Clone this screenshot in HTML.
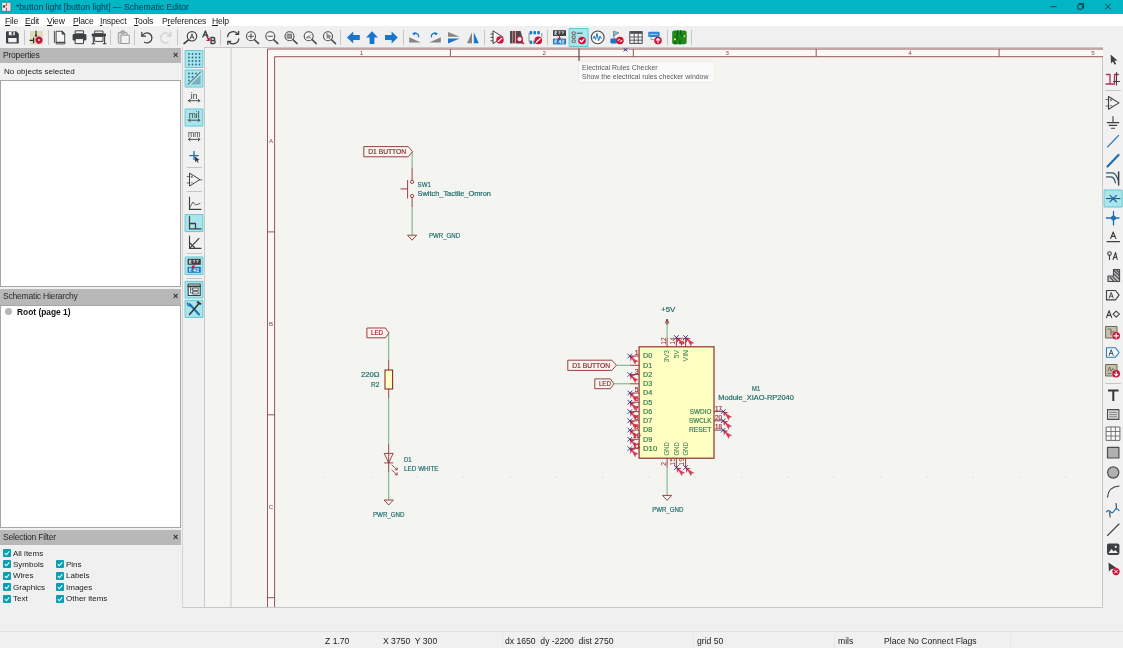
<!DOCTYPE html>
<html>
<head>
<meta charset="utf-8">
<title>Schematic Editor</title>
<style>
*{box-sizing:border-box;margin:0;padding:0}
html,body{width:1123px;height:648px;overflow:hidden;background:#f0f0f0;font-family:"Liberation Sans",sans-serif;}
body{position:relative}
.abs{position:absolute}
#menu span,.sf,.hdr,#status span,#title .t,.tt,svg{will-change:transform}
#title{left:0;top:0;width:1123px;height:14px;background:#00b5c4;}
#title .t{left:16px;top:2px;font-size:8.6px;line-height:10px;color:#0a3840;white-space:nowrap}
#menu{left:0;top:14px;width:1123px;height:12px;background:#fff;}
#menu span{position:absolute;top:1.5px;font-size:8.6px;letter-spacing:-.2px;line-height:10px;color:#1a1a1a;white-space:nowrap}
#menu u{text-decoration:underline;text-underline-offset:1px}
#tb{left:0;top:26px;width:1123px;height:21px;background:#f0f0f0;}
.sep{position:absolute;top:30px;width:1px;height:15px;background:#c9c9c9}
.hdr{position:absolute;left:0;width:181px;height:15px;background:#b8b8b8;font-size:8.6px;letter-spacing:-.25px;line-height:15px;color:#2a2a2a;padding-left:3px}
.hdr b{position:absolute;right:3px;top:0;font-weight:bold;font-size:9px}
.box{position:absolute;left:0;width:181px;background:#fff;border:1px solid #a6a6a6;border-bottom-width:1.5px}
.sf{position:absolute;font-size:8px;line-height:10px;color:#1a1a1a;white-space:nowrap}
.cb{position:absolute;width:8px;height:8px;background:#0c9fb2;border-radius:1px}
#status{left:0;top:631px;width:1123px;height:17px;background:#f0f0f0;border-top:1px solid #e0e0e0}
#status i{position:absolute;top:1px;width:1px;height:16px;background:#e7e7e7}
#status span{position:absolute;top:3.5px;font-size:8.6px;line-height:11px;color:#1a1a1a;white-space:nowrap}
#canvas{left:204px;top:47px;width:899px;height:561px;border:1px solid #c8c8c8;background:#f4f5f0;overflow:hidden}
</style>
</head>
<body>
<!-- title bar -->
<div id="title" class="abs"><div class="t abs">*button light [button light] — Schematic Editor</div></div>
<svg class="abs" style="left:0;top:0" width="14" height="14" viewBox="0 0 14 14">
<rect x="1.800" y="2.300" width="9" height="9" rx=".8" fill="#f4efec" stroke="#1f6a7a" stroke-width=".7"/>
<rect x="6.600" y="3" width="3.600" height="7.800" fill="#f8d8da"/>
<circle cx="4.200" cy="6.500" r="1.300" fill="#4a3020"/>
<path d="M6.300 3.200V6M6.300 7.600V10.800" stroke="#a03858" stroke-width="1"/>
<path d="M5 6.800h3.400" stroke="#f4efec" stroke-width="1"/>
</svg>
<!-- menu -->
<div id="menu" class="abs">
<span style="left:5px"><u>F</u>ile</span>
<span style="left:25px"><u>E</u>dit</span>
<span style="left:47px"><u>V</u>iew</span>
<span style="left:73px"><u>P</u>lace</span>
<span style="left:100px"><u>I</u>nspect</span>
<span style="left:134px"><u>T</u>ools</span>
<span style="left:162px">P<u>r</u>eferences</span>
<span style="left:212px"><u>H</u>elp</span>
</div>
<div id="tb" class="abs"></div>
<!-- top toolbar icons -->
<svg class="abs" style="left:0;top:27px" width="1123" height="20" viewBox="0 27 1123 20" fill="none" stroke-linecap="round" stroke-linejoin="round">
<g stroke="#c6c6c6" stroke-width="1" shape-rendering="crispEdges">
<path d="M24.5 30V45M48.5 30V45M110.5 30V45M134.5 30V45M177.5 30V45M220.5 30V45M340.5 30V45M403.5 30V45M484.5 30V45M547.5 30V45M667.5 30V45M691.5 30V45"/>
</g>
<!-- save -->
<g id="i-save">
<path d="M6 32.2a1 1 0 0 1 1-1h9.2l2.6 2.6v8.7a1 1 0 0 1-1 1H7a1 1 0 0 1-1-1z" fill="#3d4043"/>
<rect x="8.2" y="38" width="8.4" height="4.3" fill="#f4f4f4"/>
<rect x="8.8" y="31.6" width="6" height="3.6" fill="#f4f4f4"/>
<rect x="11.6" y="32" width="1.8" height="2.8" fill="#3d4043"/>
</g>
<!-- schematic setup -->
<g id="i-setup">
<rect x="30" y="31" width="12.800" height="13.600" fill="#dfdabc"/>
<path d="M36 31.200V35.600" stroke="#3a4a30" stroke-width="1.300"/><circle cx="36" cy="35.700" r="1.100" fill="#2a2a20"/>
<path d="M30 40.300H33.600M33.600 38V42.700" stroke="#2a2a20" stroke-width="1.200"/>
<circle cx="39" cy="40.100" r="2.500" fill="none" stroke="#c8143c" stroke-width="2.200" stroke-dasharray="1.300 0.660"/>
<circle cx="39" cy="40.100" r="2" fill="#c8143c"/>
<circle cx="39" cy="40.100" r="1" fill="#fde"/>
</g>
<!-- page settings -->
<g stroke="#4a4a4a" stroke-width="1" fill="#f6f6f6">
<path d="M54.400 31.300V42.300" fill="none"/>
<path d="M56.500 31.300h5.600l2.600 2.800v9.800h-8.200z"/>
<path d="M62.100 31.300v2.800h2.600z" fill="#3a3a3a"/>
<path d="M56.500 42.400h8.200" stroke-width="1.400"/>
</g>
<!-- print -->
<g>
<rect x="75.5" y="30.8" width="8" height="3" fill="#f4f4f4" stroke="#3d4043" stroke-width="1"/>
<rect x="72.6" y="34" width="13.8" height="6.6" rx="1.4" fill="#3d4043"/>
<rect x="75.5" y="38.6" width="8" height="5" fill="#f4f4f4" stroke="#3d4043" stroke-width="1"/>
</g>
<!-- plot -->
<g>
<rect x="95" y="31" width="8" height="2.6" fill="#e8e8e8" stroke="#3d4043" stroke-width=".9"/>
<rect x="91.8" y="33.4" width="14.2" height="3.2" rx=".8" fill="#3d4043"/>
<rect x="95" y="36.4" width="8" height="5" fill="#f4f4f4" stroke="#3d4043" stroke-width="1"/>
<path d="M93.3 36.5V43.6M104.6 36.5V43.6M92 43.8h2.8M103.2 43.8h2.8" stroke="#3d4043" stroke-width="1.1"/>
</g>
<!-- paste (disabled) -->
<g stroke="#9a9a9a" stroke-width="1" fill="#dedede">
<rect x="118.3" y="32.6" width="9" height="10.6" rx=".8"/>
<rect x="121" y="31" width="3.8" height="2.4" rx=".6" fill="#bdbdbd"/>
<rect x="121.3" y="35.2" width="8" height="8.3" fill="#f2f2f2"/>
</g>
<!-- undo -->
<g stroke="#3d4043" stroke-width="1.3">
<path d="M141.8 36.2h3.6M141.8 36.2v-3.8"/>
<path d="M142.3 36a5 5 0 1 1 2.2 6.3"/>
</g>
<!-- redo disabled -->
<g stroke="#cfcfcf" stroke-width="1.3">
<path d="M170.8 36.2h-3.6M170.8 36.2v-3.8"/>
<path d="M170.3 36a5 5 0 1 0-2.2 6.3"/>
</g>
<!-- find -->
<g stroke="#3d4043" stroke-width="1.2">
<circle cx="192" cy="36.3" r="4.7" fill="#f6f6f6"/>
<path d="M188.5 39.8L184 43.6" stroke-width="1.6"/>
<path d="M190.2 38.8l1.8-5 1.8 5M190.9 37.3h2.2" stroke-width=".9"/>
</g>
<!-- find replace -->
<g stroke="#3d4043" stroke-width="1.3">
<path d="M202.8 37l2.6-6 2.6 6M203.8 35h3.2"/>
<path d="M211 43.5v-6h2.3a1.5 1.5 0 0 1 0 3h-2.3h2.7a1.5 1.5 0 0 1 0 3z"/>
<path d="M206.8 36.6l2.2 3.6M209.2 38.2v2.2h-2.2" stroke="#d3143c" stroke-width="1.2"/>
</g>
<!-- refresh -->
<g stroke="#3d4043" stroke-width="1.3">
<path d="M227.6 36.6a5.7 5.7 0 0 1 10.2-2.6M238.8 39a5.7 5.7 0 0 1-10.2 2.6"/>
<path d="M238.6 31.3v3h-3M227.8 44.3v-3h3"/>
</g>
<!-- zoom in/out/fit/obj/sel -->
<g stroke="#4a4d50" stroke-width="1.1">
<g id="mag"><circle cx="251" cy="36.2" r="4.5" fill="#f6f6f6"/><path d="M254.4 39.6L258.6 43.6" stroke-width="1.5"/></g>
<path d="M248.7 36.2h4.6M251 33.9v4.6"/>
<g transform="translate(19.3 0)"><circle cx="251" cy="36.2" r="4.5" fill="#f6f6f6"/><path d="M254.4 39.6L258.6 43.6" stroke-width="1.5"/><path d="M248.7 36.2h4.6"/></g>
<g transform="translate(38.5 0)"><circle cx="251" cy="36.2" r="4.5" fill="#f6f6f6"/><path d="M254.4 39.6L258.6 43.6" stroke-width="1.5"/><rect x="249" y="34.2" width="4" height="4" fill="#9a9a9a" stroke-width=".7"/></g>
<g transform="translate(57.7 0)"><circle cx="251" cy="36.2" r="4.5" fill="#f6f6f6"/><path d="M254.4 39.6L258.6 43.6" stroke-width="1.5"/><path d="M248.8 37.8h4.4M249.2 37.6l1.2-1.6 1 .8 1.3-1.8" stroke-width=".7"/></g>
<g transform="translate(77 0)"><circle cx="251" cy="36.2" r="4.5" fill="#f6f6f6"/><path d="M254.4 39.6L258.6 43.6" stroke-width="1.5"/><path d="M249.8 33.8l.3 4.6 1.2-1.2 1 1.6.7-.4-1-1.6 1.6-.3z" fill="#9a9a9a" stroke-width=".5"/></g>
</g>
<!-- nav arrows -->
<g fill="#1976cf">
<path d="M347 37.5l6.2-6v3.6h6.6v4.8h-6.6v3.6z"/>
<path d="M372 31.2l6 6.2h-3.6v6.6h-4.8v-6.6h-3.6z"/>
<path d="M397.8 37.5l-6.2-6v3.6h-6.6v4.8h6.600v3.6z"/>
</g>
<!-- rotate ccw / cw -->
<path d="M409.2 37.2v5.4h11.6z" fill="#8a8480"/>
<path d="M418.6 36.8a3 3 0 0 0-4.6-3" stroke="#1976cf" stroke-width="1.3"/>
<path d="M412 33.6l3.4-1.6-.6 3.4z" fill="#1976cf"/>
<path d="M440.8 37.2v5.400h-11.6z" fill="#8a8480"/>
<path d="M431.400 36.8a3 3 0 0 1 4.6-3" stroke="#1976cf" stroke-width="1.3"/>
<path d="M438 33.600l-3.400-1.6.6 3.400z" fill="#1976cf"/>
<!-- mirror v / h -->
<path d="M448 32v4.800h11.800z" fill="#8a8480"/>
<path d="M448 43.400v-4.800h11.800z" fill="#1976cf"/>
<path d="M472 32.200v11h-5z" fill="#8a8480"/>
<path d="M473.800 32.200v11h5z" fill="#1976cf"/>
<!-- symbol editor -->
<g stroke="#3d4043" stroke-width="1">
<path d="M493 31.200v12.400l9.800-6.200z" fill="#f8f8f8"/>
<path d="M490.800 34h2.200M490.800 37.400h2.200M490.800 40.800h2.200" stroke-width=".9"/>
</g>
<circle cx="500" cy="39.900" r="3.700" fill="#cc1236"/>
<path d="M498.200 41.500l3.600-3.200" stroke="#fff" stroke-width="1.300"/>
<!-- lib browser -->
<rect x="510" y="31" width="2.600" height="12.400" fill="#4a4a4a"/>
<rect x="513" y="31" width="2.400" height="12.400" fill="#8a3a40"/>
<path d="M516 43.400v-12.400h4.600l1.600 5.400 1 7z" fill="#4a4a4a"/>
<circle cx="519.600" cy="39.200" r="2.700" fill="#fbeaea" stroke="#cc1236" stroke-width="1.200"/>
<path d="M521.600 41.400l2 2.200" stroke="#cc1236" stroke-width="1.400"/>
<!-- footprint editor -->
<g fill="#1a78c2">
<rect x="529.600" y="31" width="2.600" height="3.400" rx=".8"/><rect x="533.400" y="31" width="2.600" height="3.400" rx=".8"/><rect x="537.200" y="31" width="2.600" height="3.400" rx=".8"/>
<rect x="529.600" y="40.600" width="2.600" height="3.400" rx=".8"/><rect x="533.400" y="40.600" width="1.500" height="3.400" rx=".6"/>
</g>
<path d="M529 33.500v8.600M541.800 33.500v3" stroke="#6a6a6a" stroke-width=".8" stroke-dasharray="1.200 1"/>
<circle cx="538.300" cy="40.400" r="3.800" fill="#cc1236"/>
<path d="M536.500 42l3.600-3.200" stroke="#fff" stroke-width="1.300"/>
<!-- annotate -->
<rect x="553" y="30.200" width="13" height="5.800" fill="#3d4043"/>
<rect x="553" y="38.600" width="13" height="5.800" fill="#1a78c2"/>
<path d="M555 34.800v-3.400h1.400v1.600h-1.400l1.600 1.800M558.600 31.800h1.700l-1 1.600v.4M562 31.800h1.700l-1 1.600v.4" stroke="#fff" stroke-width=".7"/>
<path d="M555 43.200v-3.400h1.400v1.600h-1.400l1.600 1.800M560.400 43.200v-3.400l-1.800 2.400h2.400M562.200 40.200h1.700v1.400h-1.700v1.600h1.900" stroke="#fff" stroke-width=".7"/>
<path d="M559.500 35.500v4M558.200 38l1.300 1.600 1.300-1.600" stroke="#cc1236" stroke-width="1"/>
<!-- ERC highlighted -->
<rect x="569.500" y="28.500" width="18.600" height="18" fill="#a9e5ec" stroke="#63c8d4" stroke-width="1"/>
<g stroke="#4a4d50" stroke-width=".8" fill="#dff5f8">
<rect x="572.600" y="32" width="2.600" height="2.400"/><rect x="572.600" y="36" width="2.600" height="2.400"/><rect x="572.600" y="40" width="2.600" height="2.400"/>
<path d="M577.200 33.200h5" stroke-width="1"/>
</g>
<circle cx="582" cy="40.500" r="3.800" fill="#cc1236"/>
<path d="M580.100 40.500l1.400 1.500 2.400-2.800" stroke="#fff" stroke-width="1.200"/>
<!-- simulator -->
<circle cx="597.700" cy="37.400" r="6.400" fill="#f8f8f8" stroke="#4a4d50" stroke-width="1.100"/>
<path d="M593 38.400l1.200-2.400 1.300 3.400 1.500-6 1.600 7.400 1.400-4.600 1.200 2.200" stroke="#1a78c2" stroke-width="1"/>
<!-- assign footprints -->
<path d="M613.500 31.500v4.500l5-3z" fill="#9fb4c8" stroke="#5a6a7a" stroke-width=".7"/>
<rect x="610.400" y="38.400" width="6.500" height="5" rx="1" fill="#1a78c2"/>
<path d="M614 36v2.400" stroke="#5a6a7a" stroke-width=".8"/>
<circle cx="619.900" cy="40.500" r="3.800" fill="#cc1236"/>
<path d="M618 40.500a1.200 1.200 0 0 1 2.200-.6M621.800 40.500a1.200 1.200 0 0 1-2.200.6" stroke="#fff" stroke-width="1"/>
<!-- fields table -->
<rect x="630.200" y="31.600" width="12" height="11.800" fill="#f4f4f4" stroke="#4a4d50" stroke-width="1"/>
<rect x="630.200" y="31.600" width="12" height="2.200" fill="#4a4d50"/>
<path d="M634.200 32v11.400M638.200 32v11.400M630.200 37h12M630.200 40.200h12" stroke="#4a4d50" stroke-width=".9"/>
<!-- BOM -->
<rect x="648.200" y="31.800" width="11.400" height="5.200" rx="1" fill="#2f86cf"/>
<path d="M651 37v2.500h3" stroke="#7aa6cc" stroke-width="1"/>
<path d="M650 34.400h7.500" stroke="#bfe0f6" stroke-width=".8" stroke-dasharray="1.600 .7"/>
<circle cx="658" cy="40.600" r="3.800" fill="#cc1236"/>
<path d="M658 42.800v-4.200M656.300 40.200l1.700-1.800 1.700 1.800" stroke="#fff" stroke-width="1.100"/>
<!-- PCB -->
<rect x="672.200" y="30.400" width="14.400" height="13.800" rx="2" fill="#1d8a1d"/>
<path d="M677.500 30.600v4.500l-2 2.500M680.500 30.600v3.500l2.500 2.500h3M675 44v-3l3-3M680 44v-4" stroke="#0e5c0e" stroke-width="1.100"/>
<circle cx="675" cy="39.400" r="1.100" fill="#e8e84a"/><circle cx="684.400" cy="36.300" r="1.100" fill="#e8e84a"/>
</svg>

<!-- left panels -->
<div class="hdr" style="top:47.5px">Properties<b>×</b></div>
<div class="sf" style="left:4px;top:67.300px;font-size:8.100px">No objects selected</div>
<div class="box" style="top:80px;height:207px"></div>
<div class="hdr" style="top:289px;height:15.5px">Schematic Hierarchy<b>×</b></div>
<div class="box" style="top:304.500px;height:223px"></div>
<div class="hdr" style="top:529.500px">Selection Filter<b>×</b></div>

<!-- window controls -->
<svg class="abs" style="left:1040px;top:0" width="83" height="14" viewBox="1040 0 83 14" fill="none" stroke="#0a3840" stroke-width="1">
<path d="M1050.500 6.700h6"/>
<rect x="1077.800" y="4.600" width="4.600" height="4.600" rx=".8"/><path d="M1079.200 4.400v-.8h4.400v4.400h-.8"/>
<path d="M1105.200 3.900l5.400 5.400M1110.600 3.900l-5.400 5.400"/>
</svg>
<!-- left toolbar -->
<div class="abs" style="left:182px;top:47px;width:23px;height:561px;background:#f1f1f1;border-left:1px solid #d4d4d4;border-bottom:1px solid #c8c8c8"></div>
<svg class="abs" style="left:182px;top:47px" width="23" height="280" viewBox="182 47 23 280" fill="none" stroke-linecap="round" stroke-linejoin="round">
<g fill="#a9e5ec" stroke="#63c8d4" stroke-width="1">
<rect x="185.500" y="50.500" width="17.400" height="17"/>
<rect x="185.500" y="70" width="17.400" height="17"/>
<rect x="185.500" y="109" width="17.400" height="17"/>
<rect x="185.500" y="214.600" width="17.400" height="17"/>
<rect x="185.500" y="257" width="17.400" height="17.600"/>
<rect x="185.500" y="281.400" width="17.400" height="16.600"/>
<rect x="185.500" y="300.400" width="17.400" height="17"/>
</g>
<g stroke="#c4c4c4" stroke-width="1"><path d="M187 167.500h14.500M187 191.500h14.500M187 253.500h14.500M187 278.500h14.500"/></g>
<!-- grid dots -->
<g fill="#2a6f86">
<g id="gd"><circle cx="189" cy="54" r=".9"/><circle cx="192.500" cy="54" r=".9"/><circle cx="196" cy="54" r=".9"/><circle cx="199.500" cy="54" r=".9"/></g>
<use href="#gd" y="3.500"/><use href="#gd" y="7"/><use href="#gd" y="10.500"/>
</g>
<g fill="#2a6f86">
<circle cx="189" cy="73.500" r=".9"/><circle cx="192.500" cy="73.500" r=".9"/><circle cx="196" cy="73.500" r=".9"/>
<circle cx="189" cy="77" r=".9"/><circle cx="192.500" cy="77" r=".9"/><circle cx="189" cy="80.500" r=".9"/>
</g>
<path d="M188 84.500l12.500-12.500" stroke="#3d4043" stroke-width="1"/>
<path d="M191 84.500h9.500v-9.500z" fill="#6d9aa8" stroke="none" opacity=".75"/>
<!-- units -->
<g stroke="#3d4043" stroke-width=".9">
<g id="uarr"><path d="M188.500 100.700h11.400M190.200 99.300l-1.700 1.400 1.700 1.400M198.200 99.300l1.700 1.400-1.700 1.400"/></g>
<use href="#uarr" y="19.500"/><use href="#uarr" y="38.700"/>
</g>
<g fill="#33373a" stroke="none" font-family="Liberation Sans, sans-serif" font-size="8.600" text-anchor="middle">
<text x="194.200" y="98.600">in</text><text x="194.200" y="118">mil</text><text x="194.200" y="137.200" textLength="12.500" lengthAdjust="spacingAndGlyphs">mm</text>
</g>
<!-- cursor full crosshair -->
<path d="M194 151.500v8M189.800 155.600h8.400" stroke="#1f6fb0" stroke-width="1.300"/>
<path d="M194.800 156.200l.4 6 1.400-1.400 1.200 2 .9-.5-1.200-2 2-.300z" fill="#33373a"/>
<!-- hidden pins: opamp -->
<g stroke="#3d4043" stroke-width="1"><path d="M189.500 173.500v12.600l10-6.300z"/><path d="M187.200 176.600h2.300M187.200 183h2.300M199.500 179.800h2.300" stroke-width=".8"/><path d="M191 176.800h1.600M191.800 176v1.600M191 182.800h1.600" stroke-width=".6"/></g>
<!-- line modes -->
<g stroke="#3d4043" stroke-width="1.100">
<path d="M189.500 197v12.400h11.500"/><path d="M189.500 208l3.500-6 2.500 3 4.500-1.500" stroke-width=".8"/>
<path d="M189.500 216.500v12.400h11.500" stroke-width="1.200"/><path d="M190 223.500h5.500v5" stroke-width="1.300"/>
<path d="M189.500 236v12.400h11.500"/><path d="M189.500 248.400l9.500-10M189.500 242.500l5 5" stroke-width="1.200"/>
</g>
<!-- annotate auto -->
<rect x="187.600" y="258.800" width="13.200" height="6" fill="#3d4043"/>
<rect x="187.600" y="266.800" width="13.200" height="6" fill="#1a78c2"/>
<path d="M189.600 263.600v-3.400h1.400v1.600h-1.400l1.600 1.800M193.200 260.600h1.700l-1 1.600v.4M196.600 260.600h1.700l-1 1.600v.4" stroke="#fff" stroke-width=".7"/>
<path d="M189.600 271.600v-3.400h1.400v1.600h-1.400l1.600 1.800M195 271.600v-3.400l-1.800 2.400h2.400M196.800 268.600h1.700v1.400h-1.700v1.600h1.900" stroke="#fff" stroke-width=".7"/>
<path d="M196 262.500l-3.400 5.500M192.400 265.800l.2 2.200 2-.8" stroke="#cc1236" stroke-width="1"/>
<!-- hierarchy -->
<g stroke="#3d4043" stroke-width="1.100"><rect x="188.200" y="284" width="12" height="11.500" fill="#e8f8fa"/><path d="M188.200 286.400h12" stroke-width="1.600"/><rect x="193" y="288" width="5.200" height="2.400" stroke-width=".8"/><rect x="193" y="291.600" width="5.200" height="2.400" stroke-width=".8"/><path d="M190.500 287v6h2.500M190.500 289.200h2.500" stroke-width=".7"/></g>
<!-- tools -->
<path d="M189.500 304l9.500 10.500" stroke="#1f6fb0" stroke-width="2"/>
<path d="M199 303.500l-9.500 11" stroke="#33373a" stroke-width="1.600"/>
<path d="M187.500 303a2.400 2.400 0 0 0 3.600 2.600" stroke="#1f6fb0" stroke-width="1.400"/>
<path d="M197.600 302.200l2.800 1.600" stroke="#33373a" stroke-width="2"/>
</svg>

<!-- right toolbar -->
<div class="abs" style="left:1103px;top:47px;width:20px;height:560px;background:#f1f1f1"></div>
<svg class="abs" style="left:1103px;top:47px" width="20" height="540" viewBox="1103 47 20 540" fill="none" stroke-linecap="round" stroke-linejoin="round">
<rect x="1104.500" y="190" width="17.600" height="17" fill="#a9e5ec" stroke="#63c8d4" stroke-width="1"/>
<g stroke="#c4c4c4" stroke-width="1"><path d="M1105.500 90.500h15M1105.500 383.500h15"/></g>
<!-- select arrow -->
<path d="M1110.600 54.500l.4 9 2-2 1.600 3.200 1.500-.7-1.600-3.200 2.900-.3z" fill="#3d4043"/>
<!-- highlight net -->
<path d="M1106.500 74.500h3.500v9.500h-4M1110 84h4.500v-9.500h4" stroke="#b03060" stroke-width="1.300"/>
<path d="M1116.500 72.500v12.500M1113.500 81.500h6" stroke="#3d4043" stroke-width="1.100"/>
<!-- symbol -->
<g stroke="#3d4043" stroke-width="1.100"><path d="M1108.500 96.500v12.800l10.500-6.400z"/><path d="M1106 99.500h2.500M1106 106h2.500" stroke-width=".8"/><path d="M1110 100h1.800M1110.900 99.100v1.800M1110 105.600h1.800" stroke-width=".6"/></g>
<!-- power -->
<g stroke="#3d4043" stroke-width="1.100"><path d="M1113 116.500v6M1107.200 122.600h11.600M1109.200 125.400h7.600M1111.400 128.200h3.200"/></g>
<!-- wire -->
<path d="M1107.500 147l11-11.500" stroke="#2b7bc0" stroke-width="1.100"/>
<!-- bus -->
<path d="M1107.500 166.500l11-11.500" stroke="#1f6fb0" stroke-width="2.200"/>
<!-- bus entry -->
<path d="M1106.500 172.800h5.500q3 0 4.500 3.500l1.500 3.500M1106.500 176.800h4q3 0 4 3l1 3" stroke="#33566e" stroke-width="1.200"/>
<path d="M1118.600 172v13" stroke="#3d4043" stroke-width="1.500"/>
<!-- no connect -->
<path d="M1106.500 198.600h13.500" stroke="#3d4043" stroke-width="1"/>
<path d="M1110 195.400l6.400 6.400M1116.400 195.400l-6.400 6.400" stroke="#1f6fb0" stroke-width="1.300"/>
<!-- junction -->
<path d="M1106.500 218h12.500M1113.500 211.500v13.500" stroke="#1f6fb0" stroke-width="1.300"/><circle cx="1113.500" cy="218" r="2.500" fill="#1f6fb0"/>
<!-- net label -->
<g stroke="#3d4043" stroke-width="1.100"><path d="M1110.600 238.500l2.600-6.500 2.600 6.500M1111.500 236.400h3.400"/><path d="M1107 241.600h12.500"/></g>
<!-- net class directive -->
<g stroke="#3d4043" stroke-width="1.100"><circle cx="1109.500" cy="253.600" r="1.800"/><path d="M1109.500 255.400v4"/><path d="M1113 259.500l2.600-7 1.600 7M1114 257.400h2.800"/></g>
<!-- rule area hatched -->
<g stroke="#4a4d50" stroke-width="1.200"><path d="M1108 281.500h11.500v-12h-6v6.500h-5.500z" fill="#cfcfcf"/><path d="M1113.500 270l6 6M1113.500 273.500l6 6M1110 277l4 4.500M1116 269.500l3.500 3.500M1113 277l4.500 4.500"/></g>
<!-- global label -->
<g stroke="#3d4043" stroke-width="1.100"><path d="M1106.500 290.500h9l3.600 4.700-3.600 4.700h-9z"/><path d="M1109.200 298l2-5.600 2 5.600M1110 296.200h2.400" stroke-width=".9"/></g>
<!-- hier label -->
<g stroke="#3d4043" stroke-width="1.100"><path d="M1106.500 317.600l2.600-7 2.600 7M1107.400 315.400h3.400"/><path d="M1113 314.200l3.200-3 3.200 3-3.200 3z"/></g>
<!-- sheet + -->
<rect x="1106" y="326.500" width="11" height="11.500" fill="#c9c0a8" stroke="#5a5a50" stroke-width=".9"/>
<path d="M1108 329h3v3M1111 335v-3h4" stroke="#5a5a50" stroke-width=".8"/>
<circle cx="1116.200" cy="335.800" r="3.800" fill="#cc1236"/><path d="M1114 335.800h4.400M1116.200 333.600v4.400" stroke="#fff" stroke-width="1.200"/>
<!-- sheet pin (blue label) -->
<g stroke="#2b7bc0" stroke-width="1.100"><path d="M1106.500 347.800h9l3.600 4.700-3.600 4.700h-9z" fill="#f2f8fc"/><path d="M1109.200 355.300l2-5.600 2 5.600M1110 353.500h2.400" stroke="#3d4043" stroke-width=".9"/></g>
<!-- sync sheet pins -->
<rect x="1106" y="364.500" width="11" height="11.500" fill="#c9c0a8" stroke="#5a5a50" stroke-width=".9"/>
<path d="M1108.200 371l1.400-4 1.400 4M1113 369a1.500 1.500 0 1 0 .01 0M1108 373.500h3" stroke="#5a5a50" stroke-width=".8"/>
<circle cx="1116.200" cy="373.800" r="3.800" fill="#cc1236"/><path d="M1116.200 371.700v4M1114.600 374.200l1.600 1.700 1.600-1.700" stroke="#fff" stroke-width="1.100"/>
<!-- text -->
<path d="M1108 390.400h10.600M1113.300 390.400v10.600" stroke="#33373a" stroke-width="2" stroke-linecap="butt"/>
<!-- text box -->
<rect x="1107.500" y="409.600" width="11.400" height="9.800" fill="#d9d9d9" stroke="#4a4d50" stroke-width="1.100"/><path d="M1109.600 412.400h7.200M1109.600 414.600h7.200M1109.600 416.800h7.200" stroke="#6a6d70" stroke-width=".8"/>
<!-- table -->
<rect x="1106.500" y="427" width="13.400" height="13.400" fill="#fafafa" stroke="#6a6d70" stroke-width="1"/><path d="M1111 427v13.400M1115.400 427v13.400M1106.500 431.500h13.400M1106.500 436h13.400" stroke="#6a6d70" stroke-width=".9"/>
<!-- rectangle -->
<rect x="1107.500" y="447.400" width="11.400" height="10.600" fill="#b0b0b0" stroke="#4a4d50" stroke-width="1.200"/>
<!-- circle -->
<circle cx="1113.200" cy="472.500" r="5.600" fill="#b0b0b0" stroke="#4a4d50" stroke-width="1.200"/>
<!-- arc -->
<path d="M1107.600 497q.6-10 11.500-11" stroke="#3d4043" stroke-width="1.200"/>
<!-- bezier -->
<path d="M1116 503.500q1 4-.2 6M1110 511.500q-.8 3 .2 5.500" stroke="#3d4043" stroke-width="1.100"/>
<path d="M1106.500 511.800q2-2.200 4 0t4-1.300 4.500 0" stroke="#1f6fb0" stroke-width="1.200"/>
<!-- line -->
<path d="M1107.500 535.500l11.500-11.500" stroke="#3d4043" stroke-width="1.100"/>
<!-- image -->
<rect x="1107" y="543.500" width="12.400" height="11.400" rx="1.800" fill="#3d4043"/><path d="M1108.500 553l3-4 2.200 2.600 1.600-1.600 2.600 3z" fill="#f4f4f4"/><circle cx="1115.800" cy="546.800" r="1.100" fill="#f4f4f4"/>
<!-- delete tool -->
<path d="M1108.500 562.500l.4 9 2.200-2.200 5.400-1.200z" fill="#3d4043"/>
<circle cx="1116" cy="571.600" r="3.600" fill="#cc1236"/><path d="M1114.500 570.100l3 3M1117.500 570.100l-3 3" stroke="#fff" stroke-width="1"/>
</svg>
<!-- canvas -->
<div id="canvas" class="abs"></div>
<!--CANVAS-START-->
<svg class="abs" id="cv" style="left:205px;top:48px" width="898" height="559" viewBox="205 48 898 559" fill="none" font-family="Liberation Sans, sans-serif">
<style>#cv text{paint-order:stroke;stroke-width:.18px}</style>
<path d="M231 48V607" stroke="#d7d7d3" stroke-width="1.500"/>
<g fill="#c9c9c4"><rect x="324.3" y="476.600" width="1" height="1" /><rect x="370.6" y="476.600" width="1" height="1" /><rect x="416.9" y="476.600" width="1" height="1" /><rect x="463.2" y="476.600" width="1" height="1" /><rect x="509.5" y="476.600" width="1" height="1" /><rect x="555.8" y="476.600" width="1" height="1" /><rect x="602.1" y="476.600" width="1" height="1" /><rect x="648.4" y="476.600" width="1" height="1" /><rect x="694.7" y="476.600" width="1" height="1" /><rect x="741.0" y="476.600" width="1" height="1" /><rect x="787.3" y="476.600" width="1" height="1" /><rect x="833.6" y="476.600" width="1" height="1" /><rect x="879.9" y="476.600" width="1" height="1" /><rect x="926.2" y="476.600" width="1" height="1" /><rect x="972.5" y="476.600" width="1" height="1" /><rect x="1018.8" y="476.600" width="1" height="1" /><rect x="1065.1" y="476.600" width="1" height="1" /><rect x="1111.4" y="476.600" width="1" height="1" /></g>
<path d="M267.500 607V49H1103V56.700H274.600V607Z" fill="#faf9f6"/>
<g stroke="#8c4448" stroke-width=".9">
<path d="M267.500 607V49H1103M274.600 607V56.700H1103"/>
<path d="M450.4 49V56.700M633.3 49V56.700M816.2 49V56.700M999.1 49V56.700"/>
<path d="M267.500 231.9H274.600M267.500 414.8H274.600M267.500 597.7H274.600"/>
</g>
<g fill="#8c4448" font-size="6.200" text-anchor="middle">
<text x="361.4" y="55">1</text>
<text x="544.3" y="55">2</text>
<text x="727.2" y="55">3</text>
<text x="910.1" y="55">4</text>
<text x="1093.0" y="55">5</text>
<text x="271.100" y="142.7">A</text>
<text x="271.100" y="325.6">B</text>
<text x="271.100" y="508.5">C</text>
</g>
<path d="M412.1 152V168" stroke="#3f9a58" stroke-width=".75"/>
<path d="M412.1 168V180.200" stroke="#8a3030" stroke-width=".9"/>
<path d="M363.8 146.6H408.2L412.6 151.7L408.2 156.8H363.8Z" stroke="#8e2a2a" stroke-width=".9" fill="#f8f6f2"/>
<text x="368.2" y="154.0" fill="#8e2a2a" stroke="#8e2a2a" font-size="6.4" text-anchor="start" textLength="38.0" lengthAdjust="spacingAndGlyphs">D1 BUTTON</text>
<circle cx="412.1" cy="181.900" r="1.600" stroke="#8a3030" stroke-width=".9"/>
<circle cx="412.1" cy="196" r="1.600" stroke="#8a3030" stroke-width=".9"/>
<path d="M407.600 180V198.500M400.400 188.900H407.600" stroke="#8a3030" stroke-width=".9"/>
<path d="M412.1 197.700V207" stroke="#8a3030" stroke-width=".9"/>
<path d="M412.1 207V235.200" stroke="#3f9a58" stroke-width=".75"/>
<path d="M407.5 235.2H416.7L412.1 240.2Z" stroke="#8a3030" stroke-width=".9"/>
<text x="417.6" y="186.9" fill="#1f6b6b" stroke="#1f6b6b" font-size="6.6" text-anchor="start" textLength="13.2" lengthAdjust="spacingAndGlyphs">SW1</text>
<text x="417.6" y="196.2" fill="#1f6b6b" stroke="#1f6b6b" font-size="6.6" text-anchor="start" textLength="73.4" lengthAdjust="spacingAndGlyphs">Switch_Tactile_Omron</text>
<text x="428.9" y="238.0" fill="#1f6b6b" stroke="#1f6b6b" font-size="6.6" text-anchor="start" textLength="31.2" lengthAdjust="spacingAndGlyphs">PWR_GND</text>
<path d="M388.7 333V360M388.7 398V444M388.7 472V500" stroke="#3f9a58" stroke-width=".75"/>
<path d="M388.7 360V370M388.7 389V398M388.7 444V472" stroke="#8a3030" stroke-width=".9"/>
<path d="M366.9 328.0H385.4L388.9 332.9L385.4 337.8H366.9Z" stroke="#8e2a2a" stroke-width=".9" fill="#f8f6f2"/>
<text x="371.0" y="335.2" fill="#8e2a2a" stroke="#8e2a2a" font-size="6.4" text-anchor="start" textLength="12.0" lengthAdjust="spacingAndGlyphs">LED</text>
<rect x="385" y="370" width="7.600" height="19" fill="#ffffc2" stroke="#8a3030" stroke-width="1.100"/>
<text x="379.4" y="377.2" fill="#1f6b6b" stroke="#1f6b6b" font-size="6.6" text-anchor="end" textLength="18.4" lengthAdjust="spacingAndGlyphs">220Ω</text>
<text x="379.4" y="386.5" fill="#1f6b6b" stroke="#1f6b6b" font-size="6.6" text-anchor="end" textLength="8.4" lengthAdjust="spacingAndGlyphs">R2</text>
<path d="M384.200 453.400H393.200L388.7 462.800ZM384.200 462.900H393.200" stroke="#8a3030" stroke-width=".9"/>
<path d="M391.600 464.800L397.200 469.800M394.800 469.800H397.200V467.400M391.600 469.800L397.200 474.800M394.800 474.800H397.200V472.400" stroke="#8a3030" stroke-width=".8"/>
<path d="M384.1 500.0H393.3L388.7 505.0Z" stroke="#8a3030" stroke-width=".9"/>
<text x="404.0" y="461.8" fill="#1f6b6b" stroke="#1f6b6b" font-size="6.6" text-anchor="start" textLength="7.6" lengthAdjust="spacingAndGlyphs">D1</text>
<text x="404.0" y="471.1" fill="#1f6b6b" stroke="#1f6b6b" font-size="6.6" text-anchor="start" textLength="34.6" lengthAdjust="spacingAndGlyphs">LED WHITE</text>
<text x="373.0" y="516.9" fill="#1f6b6b" stroke="#1f6b6b" font-size="6.6" text-anchor="start" textLength="31.4" lengthAdjust="spacingAndGlyphs">PWR_GND</text>
<rect x="639.1" y="346.8" width="74.9" height="111.4" fill="#ffffc2" stroke="#8a3030" stroke-width="1.200"/>
<path d="M629.8 356.0H639.1" stroke="#8a3030" stroke-width=".9"/>
<text x="643.0" y="358.3" fill="#357a55" stroke="#357a55" font-size="6.4" text-anchor="start" textLength="9.2" lengthAdjust="spacingAndGlyphs">D0</text>
<text x="636.7" y="355.0" fill="#982a2a" stroke="#982a2a" font-size="6.9" text-anchor="middle">1</text>
<path d="M629.8 365.3H639.1" stroke="#8a3030" stroke-width=".9"/>
<text x="643.0" y="367.6" fill="#357a55" stroke="#357a55" font-size="6.4" text-anchor="start" textLength="9.2" lengthAdjust="spacingAndGlyphs">D1</text>
<path d="M629.8 374.5H639.1" stroke="#8a3030" stroke-width=".9"/>
<text x="643.0" y="376.8" fill="#357a55" stroke="#357a55" font-size="6.4" text-anchor="start" textLength="9.2" lengthAdjust="spacingAndGlyphs">D2</text>
<text x="636.7" y="373.5" fill="#982a2a" stroke="#982a2a" font-size="6.9" text-anchor="middle">3</text>
<path d="M629.8 383.8H639.1" stroke="#8a3030" stroke-width=".9"/>
<text x="643.0" y="386.1" fill="#357a55" stroke="#357a55" font-size="6.4" text-anchor="start" textLength="9.2" lengthAdjust="spacingAndGlyphs">D3</text>
<path d="M629.8 393.0H639.1" stroke="#8a3030" stroke-width=".9"/>
<text x="643.0" y="395.3" fill="#357a55" stroke="#357a55" font-size="6.4" text-anchor="start" textLength="9.2" lengthAdjust="spacingAndGlyphs">D4</text>
<text x="636.7" y="392.0" fill="#982a2a" stroke="#982a2a" font-size="6.9" text-anchor="middle">5</text>
<path d="M629.8 402.3H639.1" stroke="#8a3030" stroke-width=".9"/>
<text x="643.0" y="404.6" fill="#357a55" stroke="#357a55" font-size="6.4" text-anchor="start" textLength="9.2" lengthAdjust="spacingAndGlyphs">D5</text>
<text x="636.7" y="401.3" fill="#982a2a" stroke="#982a2a" font-size="6.9" text-anchor="middle">6</text>
<path d="M629.8 411.6H639.1" stroke="#8a3030" stroke-width=".9"/>
<text x="643.0" y="413.9" fill="#357a55" stroke="#357a55" font-size="6.4" text-anchor="start" textLength="9.2" lengthAdjust="spacingAndGlyphs">D6</text>
<text x="636.7" y="410.6" fill="#982a2a" stroke="#982a2a" font-size="6.9" text-anchor="middle">7</text>
<path d="M629.8 420.8H639.1" stroke="#8a3030" stroke-width=".9"/>
<text x="643.0" y="423.1" fill="#357a55" stroke="#357a55" font-size="6.4" text-anchor="start" textLength="9.2" lengthAdjust="spacingAndGlyphs">D7</text>
<text x="636.7" y="419.8" fill="#982a2a" stroke="#982a2a" font-size="6.9" text-anchor="middle">8</text>
<path d="M629.8 430.1H639.1" stroke="#8a3030" stroke-width=".9"/>
<text x="643.0" y="432.4" fill="#357a55" stroke="#357a55" font-size="6.4" text-anchor="start" textLength="9.2" lengthAdjust="spacingAndGlyphs">D8</text>
<text x="636.7" y="429.1" fill="#982a2a" stroke="#982a2a" font-size="6.9" text-anchor="middle">9</text>
<path d="M629.8 439.3H639.1" stroke="#8a3030" stroke-width=".9"/>
<text x="643.0" y="441.6" fill="#357a55" stroke="#357a55" font-size="6.4" text-anchor="start" textLength="9.2" lengthAdjust="spacingAndGlyphs">D9</text>
<text x="636.7" y="438.3" fill="#982a2a" stroke="#982a2a" font-size="6.9" text-anchor="middle">10</text>
<path d="M629.8 448.6H639.1" stroke="#8a3030" stroke-width=".9"/>
<text x="643.0" y="450.9" fill="#357a55" stroke="#357a55" font-size="6.4" text-anchor="start" textLength="14.2" lengthAdjust="spacingAndGlyphs">D10</text>
<text x="636.7" y="447.6" fill="#982a2a" stroke="#982a2a" font-size="6.9" text-anchor="middle">11</text>
<path d="M629.84 356.00L635.28 356.68L632.56 358.04L638.68 361.44L635.96 362.12L635.28 364.84L631.88 358.72L630.52 361.44Z" fill="#d6203c" opacity=".88"/>
<path d="M627.5 353.7L632.1 358.3M632.1 353.7L627.5 358.3" stroke="#2a2a90" stroke-width=".9"/>
<path d="M629.84 374.52L635.28 375.20L632.56 376.56L638.68 379.96L635.96 380.64L635.28 383.36L631.88 377.24L630.52 379.96Z" fill="#d6203c" opacity=".88"/>
<path d="M627.5 372.2L632.1 376.8M632.1 372.2L627.5 376.8" stroke="#2a2a90" stroke-width=".9"/>
<path d="M629.84 393.04L635.28 393.72L632.56 395.08L638.68 398.48L635.96 399.16L635.28 401.88L631.88 395.76L630.52 398.48Z" fill="#d6203c" opacity=".88"/>
<path d="M627.5 390.7L632.1 395.3M632.1 390.7L627.5 395.3" stroke="#2a2a90" stroke-width=".9"/>
<path d="M629.84 402.30L635.28 402.98L632.56 404.34L638.68 407.74L635.96 408.42L635.28 411.14L631.88 405.02L630.52 407.74Z" fill="#d6203c" opacity=".88"/>
<path d="M627.5 400.0L632.1 404.6M632.1 400.0L627.5 404.6" stroke="#2a2a90" stroke-width=".9"/>
<path d="M629.84 411.56L635.28 412.24L632.56 413.60L638.68 417.00L635.96 417.68L635.28 420.40L631.88 414.28L630.52 417.00Z" fill="#d6203c" opacity=".88"/>
<path d="M627.5 409.3L632.1 413.9M632.1 409.3L627.5 413.9" stroke="#2a2a90" stroke-width=".9"/>
<path d="M629.84 420.82L635.28 421.50L632.56 422.86L638.68 426.26L635.96 426.94L635.28 429.66L631.88 423.54L630.52 426.26Z" fill="#d6203c" opacity=".88"/>
<path d="M627.5 418.5L632.1 423.1M632.1 418.5L627.5 423.1" stroke="#2a2a90" stroke-width=".9"/>
<path d="M629.84 430.08L635.28 430.76L632.56 432.12L638.68 435.52L635.96 436.20L635.28 438.92L631.88 432.80L630.52 435.52Z" fill="#d6203c" opacity=".88"/>
<path d="M627.5 427.8L632.1 432.4M632.1 427.8L627.5 432.4" stroke="#2a2a90" stroke-width=".9"/>
<path d="M629.84 439.34L635.28 440.02L632.56 441.38L638.68 444.78L635.96 445.46L635.28 448.18L631.88 442.06L630.52 444.78Z" fill="#d6203c" opacity=".88"/>
<path d="M627.5 437.0L632.1 441.6M632.1 437.0L627.5 441.6" stroke="#2a2a90" stroke-width=".9"/>
<path d="M629.84 448.60L635.28 449.28L632.56 450.64L638.68 454.04L635.96 454.72L635.28 457.44L631.88 451.32L630.52 454.04Z" fill="#d6203c" opacity=".88"/>
<path d="M627.5 446.3L632.1 450.9M632.1 446.3L627.5 450.9" stroke="#2a2a90" stroke-width=".9"/>
<path d="M616.400 365.3H629.8M613.900 383.8H629.8" stroke="#3f9a58" stroke-width=".75"/>
<path d="M567.8 360.2H611.8L616.4 365.3L611.8 370.4H567.8Z" stroke="#8e2a2a" stroke-width=".9" fill="#f8f6f2"/>
<text x="572.2" y="367.6" fill="#8e2a2a" stroke="#8e2a2a" font-size="6.4" text-anchor="start" textLength="38.0" lengthAdjust="spacingAndGlyphs">D1 BUTTON</text>
<path d="M594.8 378.9H610.4L613.9 383.8L610.4 388.7H594.8Z" stroke="#8e2a2a" stroke-width=".9" fill="#f8f6f2"/>
<text x="598.9" y="386.1" fill="#8e2a2a" stroke="#8e2a2a" font-size="6.4" text-anchor="start" textLength="12.0" lengthAdjust="spacingAndGlyphs">LED</text>
<path d="M714.0 411.6H723.3" stroke="#8a3030" stroke-width=".9"/>
<text x="711.4" y="413.9" fill="#357a55" stroke="#357a55" font-size="6.4" text-anchor="end" textLength="21.6" lengthAdjust="spacingAndGlyphs">SWDIO</text>
<text x="718.4" y="410.6" fill="#982a2a" stroke="#982a2a" font-size="6.9" text-anchor="middle" textLength="7.0" lengthAdjust="spacingAndGlyphs">17</text>
<path d="M723.26 411.56L728.70 412.24L725.98 413.60L732.10 417.00L729.38 417.68L728.70 420.40L725.30 414.28L723.94 417.00Z" fill="#d6203c" opacity=".88"/>
<path d="M721.0 409.3L725.6 413.9M725.6 409.3L721.0 413.9" stroke="#2a2a90" stroke-width=".9"/>
<path d="M714.0 420.8H723.3" stroke="#8a3030" stroke-width=".9"/>
<text x="711.4" y="423.1" fill="#357a55" stroke="#357a55" font-size="6.4" text-anchor="end" textLength="22.4" lengthAdjust="spacingAndGlyphs">SWCLK</text>
<text x="718.4" y="419.8" fill="#982a2a" stroke="#982a2a" font-size="6.9" text-anchor="middle" textLength="7.0" lengthAdjust="spacingAndGlyphs">20</text>
<path d="M723.26 420.82L728.70 421.50L725.98 422.86L732.10 426.26L729.38 426.94L728.70 429.66L725.30 423.54L723.94 426.26Z" fill="#d6203c" opacity=".88"/>
<path d="M721.0 418.5L725.6 423.1M725.6 418.5L721.0 423.1" stroke="#2a2a90" stroke-width=".9"/>
<path d="M714.0 430.1H723.3" stroke="#8a3030" stroke-width=".9"/>
<text x="711.4" y="432.4" fill="#357a55" stroke="#357a55" font-size="6.4" text-anchor="end" textLength="22.4" lengthAdjust="spacingAndGlyphs">RESET</text>
<text x="718.4" y="429.1" fill="#982a2a" stroke="#982a2a" font-size="6.9" text-anchor="middle" textLength="7.0" lengthAdjust="spacingAndGlyphs">18</text>
<path d="M723.26 430.08L728.70 430.76L725.98 432.12L732.10 435.52L729.38 436.20L728.70 438.92L725.30 432.80L723.94 435.52Z" fill="#d6203c" opacity=".88"/>
<path d="M721.0 427.8L725.6 432.4M725.6 427.8L721.0 432.4" stroke="#2a2a90" stroke-width=".9"/>
<path d="M667.1 337.5V346.8" stroke="#8a3030" stroke-width=".9"/>
<text transform="translate(669.4 350.0) rotate(-90)" text-anchor="end" fill="#357a55" font-size="6.400" textLength="12.6" lengthAdjust="spacingAndGlyphs">3V3</text>
<text transform="translate(665.9 344.8) rotate(-90)" fill="#982a2a" font-size="6.900" textLength="7.400" lengthAdjust="spacingAndGlyphs">12</text>
<path d="M676.4 337.5V346.8" stroke="#8a3030" stroke-width=".9"/>
<text transform="translate(678.7 350.0) rotate(-90)" text-anchor="end" fill="#357a55" font-size="6.400" textLength="8.2" lengthAdjust="spacingAndGlyphs">5V</text>
<text transform="translate(675.2 344.8) rotate(-90)" fill="#982a2a" font-size="6.900" textLength="7.400" lengthAdjust="spacingAndGlyphs">14</text>
<path d="M685.6 337.5V346.8" stroke="#8a3030" stroke-width=".9"/>
<text transform="translate(687.9 350.0) rotate(-90)" text-anchor="end" fill="#357a55" font-size="6.400" textLength="11.4" lengthAdjust="spacingAndGlyphs">VIN</text>
<text transform="translate(684.4 344.8) rotate(-90)" fill="#982a2a" font-size="6.900" textLength="7.400" lengthAdjust="spacingAndGlyphs">13</text>
<path d="M676.40 337.54L681.84 338.22L679.12 339.58L685.24 342.98L682.52 343.66L681.84 346.38L678.44 340.26L677.08 342.98Z" fill="#d6203c" opacity=".88"/>
<path d="M674.1 335.2L678.7 339.8M678.7 335.2L674.1 339.8" stroke="#2a2a90" stroke-width=".9"/>
<path d="M685.60 337.54L691.04 338.22L688.32 339.58L694.44 342.98L691.72 343.66L691.04 346.38L687.64 340.26L686.28 342.98Z" fill="#d6203c" opacity=".88"/>
<path d="M683.3 335.2L687.9 339.8M687.9 335.2L683.3 339.8" stroke="#2a2a90" stroke-width=".9"/>
<path d="M667.100 319.200V337.5" stroke="#3f9a58" stroke-width=".75"/>
<path d="M667.100 319.200V325M665.300 323.400L667.100 319.200L668.900 323.400" stroke="#8a3030" stroke-width=".9"/>
<text x="668.2" y="312.2" fill="#1f6b6b" stroke="#1f6b6b" font-size="6.6" text-anchor="middle" textLength="14.2" lengthAdjust="spacingAndGlyphs">+5V</text>
<path d="M667.1 458.2V467.5" stroke="#8a3030" stroke-width=".9"/>
<text transform="translate(669.4 455.6) rotate(-90)" fill="#357a55" font-size="6.400" textLength="13.400" lengthAdjust="spacingAndGlyphs">GND</text>
<text transform="translate(665.9 465.7) rotate(-90)" fill="#982a2a" font-size="6.900">2</text>
<path d="M676.4 458.2V467.5" stroke="#8a3030" stroke-width=".9"/>
<text transform="translate(678.7 455.6) rotate(-90)" fill="#357a55" font-size="6.400" textLength="13.400" lengthAdjust="spacingAndGlyphs">GND</text>
<text transform="translate(675.2 465.7) rotate(-90)" fill="#982a2a" font-size="6.900">15</text>
<path d="M685.6 458.2V467.5" stroke="#8a3030" stroke-width=".9"/>
<text transform="translate(687.9 455.6) rotate(-90)" fill="#357a55" font-size="6.400" textLength="13.400" lengthAdjust="spacingAndGlyphs">GND</text>
<text transform="translate(684.4 465.7) rotate(-90)" fill="#982a2a" font-size="6.900">19</text>
<path d="M676.40 467.46L681.84 468.14L679.12 469.50L685.24 472.90L682.52 473.58L681.84 476.30L678.44 470.18L677.08 472.90Z" fill="#d6203c" opacity=".88"/>
<path d="M674.1 465.2L678.7 469.8M678.7 465.2L674.1 469.8" stroke="#2a2a90" stroke-width=".9"/>
<path d="M685.60 467.46L691.04 468.14L688.32 469.50L694.44 472.90L691.72 473.58L691.04 476.30L687.64 470.18L686.28 472.90Z" fill="#d6203c" opacity=".88"/>
<path d="M683.3 465.2L687.9 469.8M687.9 465.2L683.3 469.8" stroke="#2a2a90" stroke-width=".9"/>
<path d="M667.100 467.5V495.400" stroke="#3f9a58" stroke-width=".75"/>
<path d="M662.5 495.4H671.7L667.1 500.4Z" stroke="#8a3030" stroke-width=".9"/>
<text x="667.8" y="511.6" fill="#1f6b6b" stroke="#1f6b6b" font-size="6.6" text-anchor="middle" textLength="31.2" lengthAdjust="spacingAndGlyphs">PWR_GND</text>
<text x="756.2" y="390.6" fill="#1f6b6b" stroke="#1f6b6b" font-size="6.6" text-anchor="middle" textLength="8.2" lengthAdjust="spacingAndGlyphs">M1</text>
<text x="718.2" y="400.2" fill="#1f6b6b" stroke="#1f6b6b" font-size="6.6" text-anchor="start" textLength="75.6" lengthAdjust="spacingAndGlyphs">Module_XIAO-RP2040</text>
<path d="M579 48.500V61" stroke="#5a4040" stroke-width="1.100"/>
<path d="M623.500 48L627.500 51.500M627.500 48L623.500 51.500" stroke="#2a2a90" stroke-width=".9"/>
</svg>
<!--CANVAS-END-->

<!-- tooltip -->
<div class="abs" style="left:579px;top:62px;width:135px;height:20px;background:#fafafa;border-radius:2px;box-shadow:0 0 1.500px rgba(0,0,0,.18)"></div>
<div class="abs tt" style="left:582px;top:63px;font-size:6.950px;line-height:9.300px;color:#5c5c5c;white-space:nowrap">Electrical Rules Checker<br>Show the electrical rules checker window</div>
<!-- hierarchy item -->
<div class="abs" style="left:5px;top:307.800px;width:7.400px;height:7.400px;border-radius:50%;background:#b6b6b6"></div>
<div class="abs tt" style="left:16.500px;top:306.800px;font-size:8.400px;line-height:11px;font-weight:bold;color:#111;white-space:nowrap">Root (page 1)</div>
<!-- selection filter -->
<div class="cb" style="left:3.2px;top:549.10px"><svg width="8" height="8" viewBox="0 0 8 8" style="display:block"><path d="M1.800 4.100l1.600 1.600 2.900-3.400" stroke="#dff" stroke-width="1.100" fill="none"/></svg></div><div class="sf" style="left:13.399999999999999px;top:548.70px">All items</div>
<div class="cb" style="left:3.2px;top:560.45px"><svg width="8" height="8" viewBox="0 0 8 8" style="display:block"><path d="M1.800 4.100l1.600 1.600 2.900-3.400" stroke="#dff" stroke-width="1.100" fill="none"/></svg></div><div class="sf" style="left:13.399999999999999px;top:560.05px">Symbols</div>
<div class="cb" style="left:3.2px;top:571.80px"><svg width="8" height="8" viewBox="0 0 8 8" style="display:block"><path d="M1.800 4.100l1.600 1.600 2.900-3.400" stroke="#dff" stroke-width="1.100" fill="none"/></svg></div><div class="sf" style="left:13.399999999999999px;top:571.40px">Wires</div>
<div class="cb" style="left:3.2px;top:583.15px"><svg width="8" height="8" viewBox="0 0 8 8" style="display:block"><path d="M1.800 4.100l1.600 1.600 2.900-3.400" stroke="#dff" stroke-width="1.100" fill="none"/></svg></div><div class="sf" style="left:13.399999999999999px;top:582.75px">Graphics</div>
<div class="cb" style="left:3.2px;top:594.50px"><svg width="8" height="8" viewBox="0 0 8 8" style="display:block"><path d="M1.800 4.100l1.600 1.600 2.900-3.400" stroke="#dff" stroke-width="1.100" fill="none"/></svg></div><div class="sf" style="left:13.399999999999999px;top:594.10px">Text</div>
<div class="cb" style="left:56px;top:560.45px"><svg width="8" height="8" viewBox="0 0 8 8" style="display:block"><path d="M1.800 4.100l1.600 1.600 2.900-3.400" stroke="#dff" stroke-width="1.100" fill="none"/></svg></div><div class="sf" style="left:66.2px;top:560.05px">Pins</div>
<div class="cb" style="left:56px;top:571.80px"><svg width="8" height="8" viewBox="0 0 8 8" style="display:block"><path d="M1.800 4.100l1.600 1.600 2.900-3.400" stroke="#dff" stroke-width="1.100" fill="none"/></svg></div><div class="sf" style="left:66.2px;top:571.40px">Labels</div>
<div class="cb" style="left:56px;top:583.15px"><svg width="8" height="8" viewBox="0 0 8 8" style="display:block"><path d="M1.800 4.100l1.600 1.600 2.900-3.400" stroke="#dff" stroke-width="1.100" fill="none"/></svg></div><div class="sf" style="left:66.2px;top:582.75px">Images</div>
<div class="cb" style="left:56px;top:594.50px"><svg width="8" height="8" viewBox="0 0 8 8" style="display:block"><path d="M1.800 4.100l1.600 1.600 2.900-3.400" stroke="#dff" stroke-width="1.100" fill="none"/></svg></div><div class="sf" style="left:66.2px;top:594.10px">Other items</div>
<!-- status -->
<div id="status" class="abs">
<i style="left:502px"></i><i style="left:693px"></i><i style="left:834px"></i><i style="left:1010px"></i>
<span style="left:325px">Z 1.70</span>
<span style="left:383px">X 3750&nbsp; Y 300</span>
<span style="left:505px">dx 1650&nbsp; dy -2200&nbsp; dist 2750</span>
<span style="left:697px">grid 50</span>
<span style="left:838px">mils</span>
<span style="left:884px">Place No Connect Flags</span>
</div>
</body>
</html>
